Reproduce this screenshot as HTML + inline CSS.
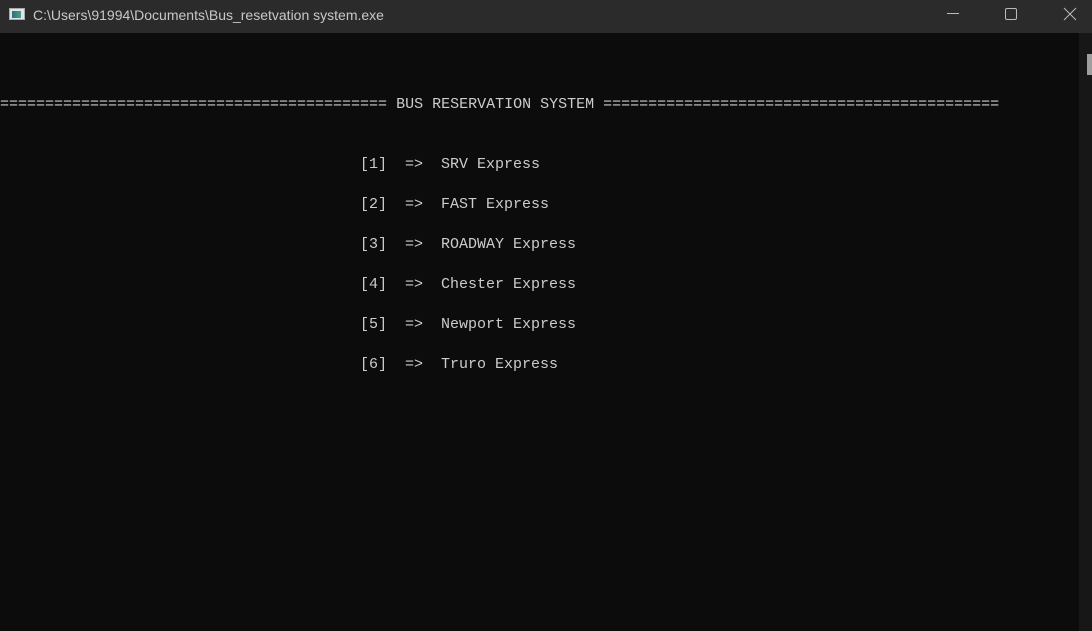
<!DOCTYPE html>
<html><head><style>
body{margin:0;width:1092px;height:631px;background:#0c0c0c;overflow:hidden;position:relative;font-family:"Liberation Sans",sans-serif}
.tb{position:absolute;left:0;top:0;width:1092px;height:33px;background:#2b2b2b}
.title{position:absolute;left:33px;top:7px;color:#c8c8c8;font-size:14px}
.ico{position:absolute;left:9px;top:8px;width:16px;height:12px;background:#dfe6ea;border:1px solid #aaa;box-sizing:border-box}
.ico i{position:absolute;left:2px;top:2px;width:9px;height:7px;background:linear-gradient(90deg,#2e6f7a,#4aa089)}
.sb{position:absolute;left:1079px;top:33px;width:13px;height:598px;background:#171717}
.th{position:absolute;left:1087px;top:54px;width:5px;height:21px;background:#9e9e9e}
pre{position:absolute;margin:0;font-family:"Liberation Mono",monospace;font-size:15px;color:#cccccc;line-height:20px}
</style></head><body>
<div class="tb">
<div class="ico"><i></i></div>
<div class="title">C:\Users\91994\Documents\Bus_resetvation system.exe</div>
<svg style="position:absolute;left:0;top:0" width="1092" height="33">
<line x1="947" y1="13.5" x2="959" y2="13.5" stroke="#bbb" stroke-width="1"/>
<rect x="1005.5" y="8.5" width="11" height="11" rx="1.5" fill="none" stroke="#bbb"/>
<path d="M1064 8L1076 20M1076 8L1064 20" stroke="#bbb" stroke-width="1"/>
</svg>
</div>
<div class="sb"></div>
<div class="th"></div>
<pre style="left:0;top:95px">=========================================== BUS RESERVATION SYSTEM ============================================</pre>
<pre style="left:360px;top:155px">[1]  =>  SRV Express

[2]  =>  FAST Express

[3]  =>  ROADWAY Express

[4]  =>  Chester Express

[5]  =>  Newport Express

[6]  =>  Truro Express</pre>
</body></html>
